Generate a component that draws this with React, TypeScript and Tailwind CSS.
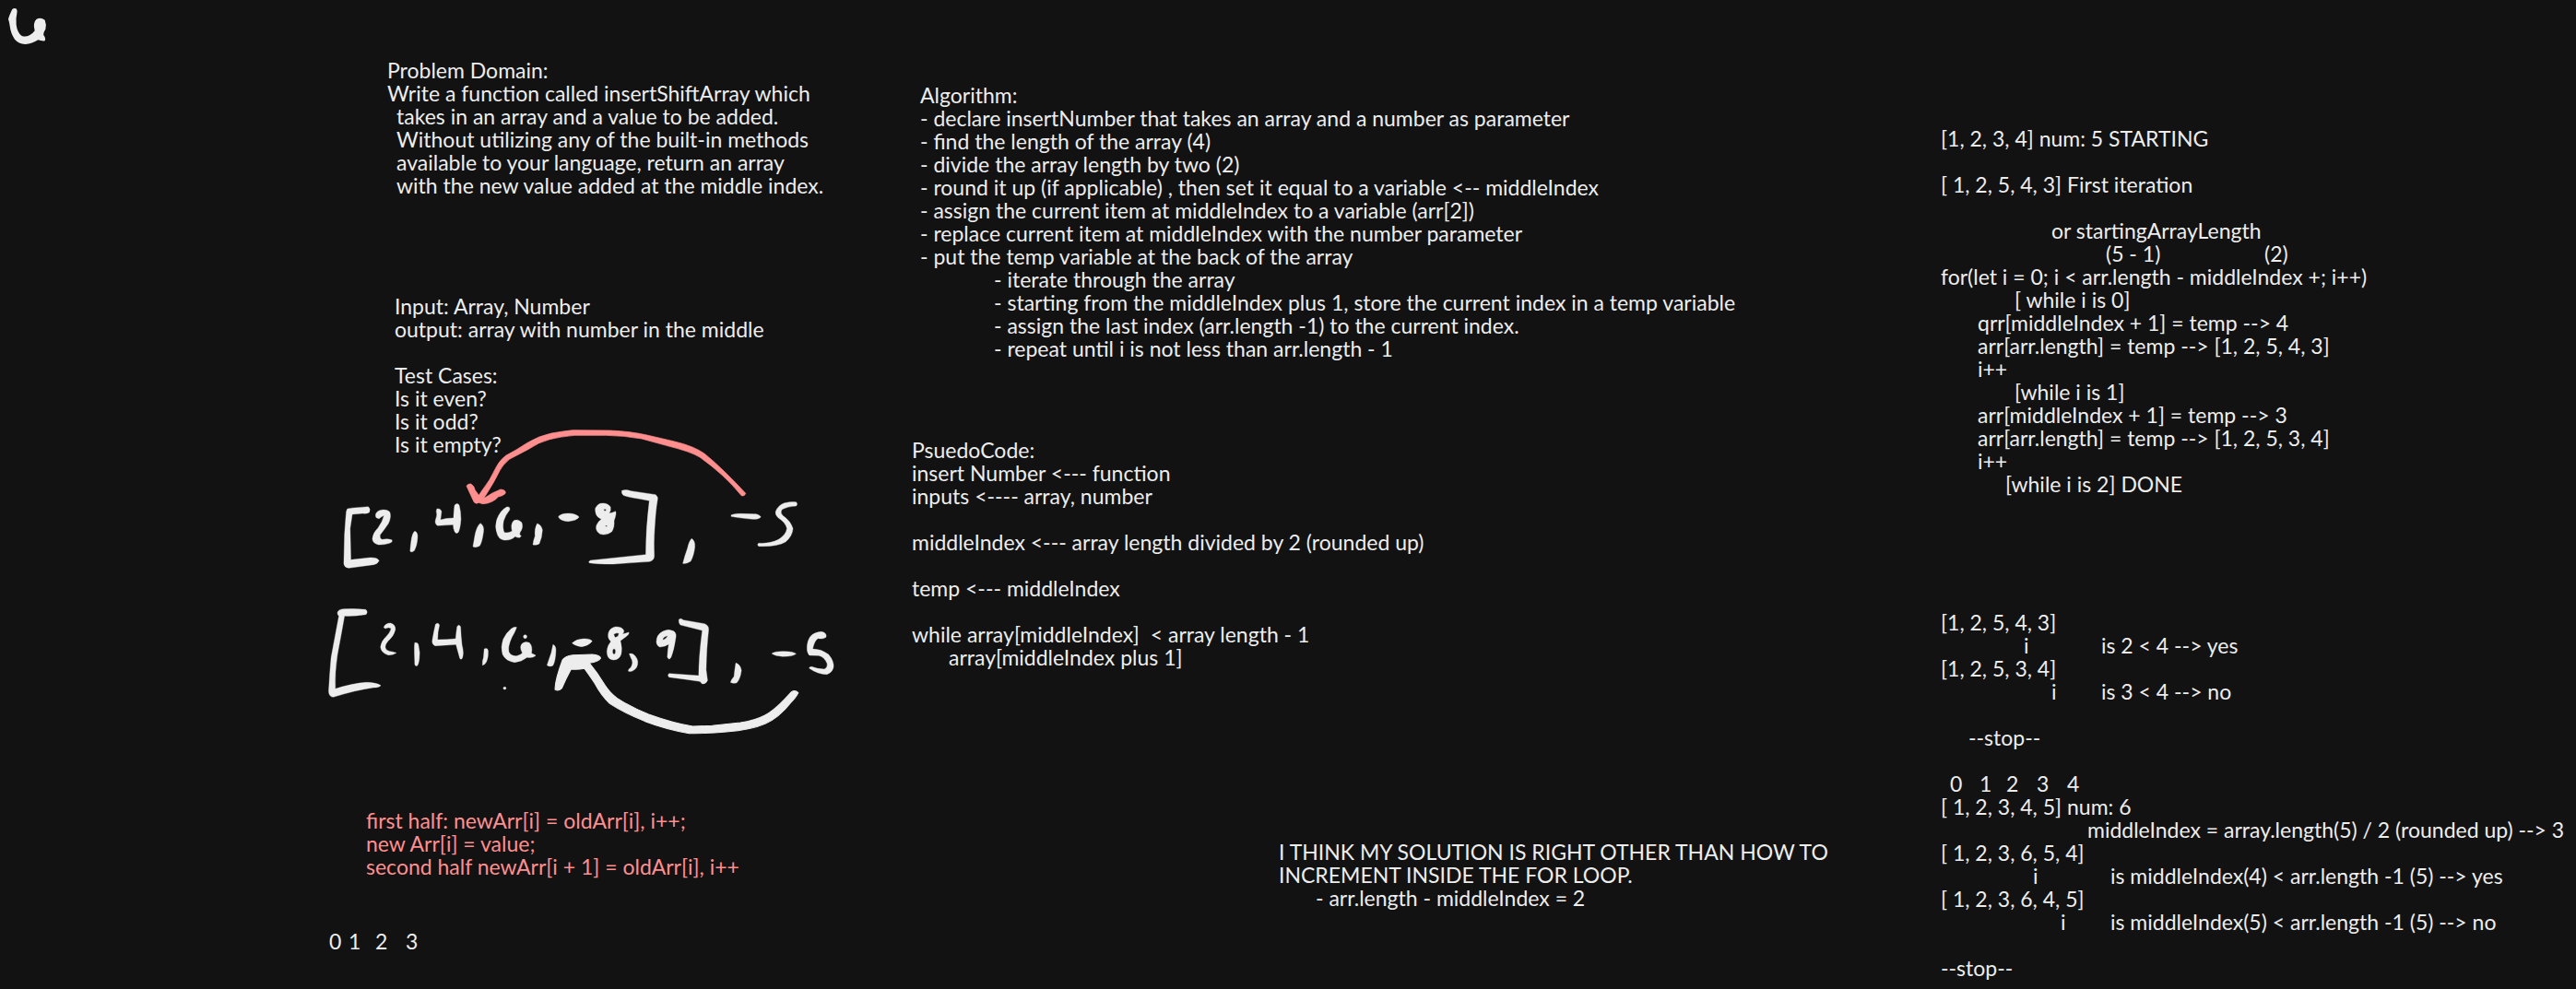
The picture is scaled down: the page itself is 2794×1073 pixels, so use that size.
import type { ReactNode } from "react";

/** A text block pinned on the canvas. */
function Note({ place, children }: { place: string; children: ReactNode }) {
  return <section className={`absolute whitespace-nowrap ${place}`}>{children}</section>;
}

/** One written line; an empty one keeps its height. */
function Line({ indent = "", children }: { indent?: string; children?: ReactNode }) {
  return <p className={`flex h-[25px] ${indent}`}>{children}</p>;
}

function Slot({ width, children }: { width: string; children?: ReactNode }) {
  return <span className={`shrink-0 ${width}`}>{children}</span>;
}

function Corner() {
  return (
    <svg className="absolute left-0 top-0 h-[60px] w-[80px]" viewBox="0 0 240 180" fill="#ededed" aria-hidden="true">
      <path d="M40 30Q47 24 54 29Q57 35 55 44Q51 60 53 80Q56 105 70 116Q82 122 96 115Q108 108 113 100Q106 75 118 63Q132 55 146 65Q152 80 148 95Q140 108 142 115Q150 125 146 133Q135 134 124 130Q105 142 82 144Q60 142 48 128Q35 110 32 85Q30 70 27 62Q30 50 40 30Z" />
    </svg>
  );
}

function FirstArray() {
  return (
    <svg className="absolute left-[340px] top-[440px] h-[190px] w-[600px]" viewBox="0 0 1568 570" preserveAspectRatio="none" strokeLinejoin="round" aria-hidden="true">
      <g fill="#ededed" fillRule="evenodd" stroke="#ededed" strokeWidth="1">
        <path d="M96 336C110 332 140 331 155 329Q163 336 158 348Q150 353 140 351L110 354L104 400L106 502L160 495Q182 494 186 505Q180 518 170 518L100 529Q88 528 86 515L88 420Q91 370 93 345Z" />
        <path d="M176 358Q176 346 188 341Q206 336 216 346Q222 362 212 385Q200 405 189 421Q187 433 194 436Q210 432 222 437Q226 443 216 448Q200 454 184 453Q168 448 167 434Q168 415 183 398Q196 378 200 358Q192 362 186 368Q176 368 176 358Z" />
        <path d="M287 409Q296 412 295 430Q294 455 286 472Q278 480 274 474Q275 455 277 440Q280 415 287 409Z" />
        <path d="M350 336Q360 334 363 345Q362 355 360 372Q375 366 397 366Q398 340 400 325Q406 315 413 324Q418 345 418 370Q416 400 411 412Q405 420 400 410Q396 400 396 388Q370 390 352 391Q343 385 346 372Q352 355 348 344Z" />
        <path d="M473 383Q484 390 482 410Q478 445 471 457Q460 464 452 459Q455 440 458 420Q463 392 473 383Z" />
        <path d="M548 330Q558 328 556 340Q545 355 539 375Q535 400 541 413Q552 416 563 409Q558 385 568 374Q580 368 590 380Q596 395 586 412Q582 420 589 425L584 430Q576 430 572 426Q560 440 540 438Q524 435 520 415Q513 395 520 370Q530 340 548 330Z" />
        <path d="M634 384Q646 388 649 405Q648 430 640 450Q632 456 622 453Q624 435 628 425Q626 400 634 384Z" />
        <path d="M694 362Q700 352 720 351Q742 350 753 363Q745 375 722 377Q700 376 694 362Z" />
        <path d="M800 350Q794 330 812 319Q832 314 842 330Q844 342 838 350Q846 350 856 344Q860 350 852 375Q854 395 846 410Q830 425 812 418Q798 408 802 390Q806 378 816 370Q802 362 800 350ZM822 338L829 337L829 343L825 343ZM828 390h4v4h-4Z" />
        <path d="M874 277Q885 272 900 278L970 290Q978 298 975 308Q970 340 967 400Q964 450 966 490Q965 505 952 508Q900 512 850 516Q800 516 782 512Q778 508 785 504L942 485Q942 400 952 310L925 304Q890 298 878 292Q872 285 874 277Z" />
        <path d="M1072 433Q1082 440 1081 460Q1078 490 1069 507Q1058 516 1047 514Q1052 490 1060 465Q1064 442 1072 433Z" />
        <path d="M1184 356Q1195 350 1215 352L1255 353Q1268 358 1268 363Q1262 371 1245 370Q1205 366 1184 361Z" />
        <path d="M1310 345Q1316 325 1335 317Q1355 312 1368 314Q1374 320 1368 327Q1345 328 1328 338Q1322 348 1330 358Q1352 375 1359 400Q1358 425 1338 444Q1315 460 1262 458Q1256 453 1262 448Q1295 450 1318 436Q1340 420 1342 400Q1338 380 1318 366Q1308 356 1310 345Z" />
      </g>
      <g fill="#ff8f8f" stroke="#ff8f8f" strokeWidth="2">
        <path d="M464 300L478 276Q500 245 518 200Q528 178 545 163Q575 145 605 122Q640 98 675 90Q710 83 735 80L840 81Q900 84 945 96L1020 116Q1080 132 1110 158Q1160 205 1225 286Q1222 296 1213 293Q1165 225 1095 168Q1070 150 1000 130L930 108Q880 98 830 97L740 97Q700 101 670 110Q640 118 608 143L555 175Q535 195 528 212Q512 250 486 296L470 312Z" />
        <path d="M434 262Q437 254 446 255Q456 262 458 275L470 294L486 300Q505 284 530 273Q546 274 544 286Q538 294 524 297Q508 318 480 320L468 316Q462 322 455 314Q445 290 434 262Z" />
      </g>
    </svg>
  );
}

function SecondArray() {
  return (
    <svg className="absolute left-[340px] top-[630px] h-[190px] w-[600px]" viewBox="0 0 1568 570" preserveAspectRatio="none" fill="#ededed" fillRule="evenodd" stroke="#ededed" strokeWidth="1" strokeLinejoin="round" aria-hidden="true">
      <path d="M68 104Q70 93 85 92Q120 90 148 94Q156 102 149 110Q120 116 88 115Q78 180 68 240Q60 300 62 352Q110 334 150 331Q180 332 191 341Q186 348 170 348Q120 356 56 379Q44 378 43 360Q46 300 50 250L72 115Q68 112 68 104Z" />
      <path d="M199 152Q204 138 218 138Q233 142 232 160Q228 180 212 196Q200 212 205 222Q210 230 222 231L235 235Q226 243 212 242Q192 236 190 216Q192 196 206 182Q218 168 220 155Q212 150 204 156Z" />
      <path d="M287 202Q297 200 298 212Q303 235 300 255Q298 272 294 277Q286 280 287 265Q286 235 286 215Z" />
      <path d="M346 142Q354 134 357 145Q352 165 352 192Q380 192 403 189Q405 165 407 150Q412 140 417 150Q418 180 421 210Q427 235 422 252Q416 262 413 245L404 208Q375 210 345 212Q335 208 337 193Q341 165 346 142Z" />
      <path d="M484 222Q494 218 495 228Q496 250 490 265Q486 274 479 275Q478 262 482 250Z" />
      <path d="M560 157Q570 148 576 152Q572 165 562 185Q550 215 554 232Q560 246 575 245Q588 242 592 235Q582 215 592 204Q600 196 612 202Q622 215 618 236L630 243Q625 252 605 250Q590 264 570 266Q545 262 536 240Q530 215 538 190Q546 170 560 157Z" />
      <ellipse cx="600" cy="182" rx="5" ry="6" />
      <path d="M679 208Q688 212 687 230Q686 260 679 276Q670 282 662 275Q668 255 674 235Z" />
      <path d="M733 203Q745 190 765 189Q785 188 790 197Q780 212 760 215Q742 212 733 203Z" />
      <path d="M836 170Q840 154 856 150Q876 150 880 163Q880 170 876 174L894 168Q896 174 886 182L870 196Q876 220 872 240Q866 258 850 258Q836 256 833 242Q828 220 843 198Q832 186 836 170ZM851 175Q860 168 866 172L863 181L855 185ZM848 226Q852 216 856 226Q858 238 851 240Q846 236 848 226Z" />
      <path d="M895 238Q905 234 912 245Q924 262 916 282Q906 298 893 295Q890 290 900 282Q908 265 900 252Z" />
      <path d="M972 200Q972 175 990 165Q1005 157 1015 162Q1030 165 1027 185Q1022 225 1014 248Q1008 262 1003 248Q1004 225 1007 207Q995 216 982 216Q973 212 972 200ZM990 193Q990 182 1004 179Q1001 189 990 193Z" />
      <path d="M1036 126Q1042 120 1048 128L1108 140Q1121 145 1120 160Q1114 220 1113 290L1117 325Q1112 338 1102 336L1095 328Q1050 320 1008 314Q1002 308 1008 302L1092 309Q1092 250 1102 162L1040 144Q1034 138 1036 126Z" />
      <path d="M1197 268Q1210 272 1213 292Q1210 320 1200 332Q1190 336 1182 331Q1184 322 1192 312Q1194 290 1197 268Z" />
      <path d="M1299 237Q1310 229 1335 230Q1362 231 1368 238Q1360 247 1330 247Q1308 245 1299 237Z" />
      <path d="M1408 182Q1420 167 1440 166Q1456 170 1453 184Q1445 192 1430 188Q1420 195 1415 222Q1440 222 1460 240Q1476 262 1474 282Q1470 300 1455 305Q1430 305 1405 285Q1405 280 1412 280Q1430 288 1448 288Q1458 282 1456 270Q1448 248 1432 244L1406 243Q1398 235 1399 215Q1400 195 1408 182Z" />
      <path strokeWidth="3" d="M685 350Q686 320 706 258Q712 246 735 242L790 240Q812 242 814 252Q808 264 782 268Q805 300 826 340Q840 365 860 382Q900 412 950 435Q1020 464 1075 474L1130 472L1210 462Q1250 456 1280 438Q1310 420 1355 362Q1365 354 1374 365Q1368 380 1352 398Q1320 445 1280 466Q1240 486 1170 492Q1120 498 1065 497Q1000 484 940 458Q880 430 840 400Q815 372 798 335Q780 305 768 286Q750 290 730 288Q715 320 704 350Q696 360 685 355Z" />
      <ellipse cx="542" cy="350" rx="4" ry="4" />
    </svg>
  );
}

export default function App() {
  return (
    <main className="relative min-h-screen w-full overflow-hidden bg-[#121212] font-['Virgil','Lato',sans-serif] text-[23px] leading-[25px] text-[#ededed]">
      <Corner />

      <Note place="left-[420px] top-[64px]">
        <Line>Problem Domain:</Line>
        <Line>Write a function called insertShiftArray which</Line>
        <Line indent="pl-[10px]">takes in an array and a value to be added.</Line>
        <Line indent="pl-[10px]">Without utilizing any of the built-in methods</Line>
        <Line indent="pl-[10px]">available to your language, return an array</Line>
        <Line indent="pl-[10px]">with the new value added at the middle index.</Line>
      </Note>

      <Note place="left-[428px] top-[320px]">
        <Line>Input: Array, Number</Line>
        <Line>output: array with number in the middle</Line>
        <Line />
        <Line>Test Cases:</Line>
        <Line>Is it even?</Line>
        <Line>Is it odd?</Line>
        <Line>Is it empty?</Line>
      </Note>

      <FirstArray />
      <SecondArray />

      <Note place="left-[397px] top-[878px] text-[#ff8f8f]">
        <Line>first half: newArr[i] = oldArr[i], i++;</Line>
        <Line>new Arr[i] = value;</Line>
        <Line>second half newArr[i + 1] = oldArr[i], i++</Line>
      </Note>

      <Note place="left-[357px] top-[1009px]">
        <Line>
          <Slot width="w-[21px]">0</Slot>
          <Slot width="w-[29px]">1</Slot>
          <Slot width="w-[33px]">2</Slot>
          <span>3</span>
        </Line>
      </Note>

      <Note place="left-[998px] top-[91px]">
        <Line>Algorithm:</Line>
        <Line>- declare insertNumber that takes an array and a number as parameter</Line>
        <Line>- find the length of the array (4)</Line>
        <Line>- divide the array length by two (2)</Line>
        <Line>- round it up (if applicable) , then set it equal to a variable &lt;-- middleIndex</Line>
        <Line>- assign the current item at middleIndex to a variable (arr[2])</Line>
        <Line>- replace current item at middleIndex with the number parameter</Line>
        <Line>- put the temp variable at the back of the array</Line>
        <Line indent="pl-[80px]">- iterate through the array</Line>
        <Line indent="pl-[80px]">- starting from the middleIndex plus 1, store the current index in a temp variable</Line>
        <Line indent="pl-[80px]">- assign the last index (arr.length -1) to the current index.</Line>
        <Line indent="pl-[80px]">- repeat until i is not less than arr.length - 1</Line>
      </Note>

      <Note place="left-[989px] top-[476px]">
        <Line>PsuedoCode:</Line>
        <Line>insert Number &lt;--- function</Line>
        <Line>inputs &lt;---- array, number</Line>
        <Line />
        <Line>middleIndex &lt;--- array length divided by 2 (rounded up)</Line>
        <Line />
        <Line>temp &lt;--- middleIndex</Line>
        <Line />
        <Line>
          <span className="mr-3">while array[middleIndex]</span>
          <span>&lt; array length - 1</span>
        </Line>
        <Line indent="pl-[40px]">array[middleIndex plus 1]</Line>
      </Note>

      <Note place="left-[1387px] top-[912px]">
        <Line>I THINK MY SOLUTION IS RIGHT OTHER THAN HOW TO</Line>
        <Line>INCREMENT INSIDE THE FOR LOOP.</Line>
        <Line indent="pl-[40px]">- arr.length - middleIndex = 2</Line>
      </Note>

      <Note place="left-[2105px] top-[138px]">
        <Line>[1, 2, 3, 4] num: 5 STARTING</Line>
        <Line />
        <Line>[ 1, 2, 5, 4, 3] First iteration</Line>
        <Line />
        <Line indent="pl-[120px]">or startingArrayLength</Line>
        <Line indent="pl-[179px]">
          <Slot width="w-[172px]">(5 - 1)</Slot>
          <span>(2)</span>
        </Line>
        <Line>for(let i = 0; i &lt; arr.length - middleIndex +; i++)</Line>
        <Line indent="pl-[80px]">[ while i is 0]</Line>
        <Line indent="pl-[40px]">qrr[middleIndex + 1] = temp --&gt; 4</Line>
        <Line indent="pl-[40px]">arr[arr.length] = temp --&gt; [1, 2, 5, 4, 3]</Line>
        <Line indent="pl-[40px]">i++</Line>
        <Line indent="pl-[80px]">[while i is 1]</Line>
        <Line indent="pl-[40px]">arr[middleIndex + 1] = temp --&gt; 3</Line>
        <Line indent="pl-[40px]">arr[arr.length] = temp --&gt; [1, 2, 5, 3, 4]</Line>
        <Line indent="pl-[40px]">i++</Line>
        <Line indent="pl-[70px]">[while i is 2] DONE</Line>
      </Note>

      <Note place="left-[2105px] top-[663px]">
        <Line>[1, 2, 5, 4, 3]</Line>
        <Line indent="pl-[90px]">
          <Slot width="w-[84px]">i</Slot>
          <span>is 2 &lt; 4 --&gt; yes</span>
        </Line>
        <Line>[1, 2, 5, 3, 4]</Line>
        <Line indent="pl-[120px]">
          <Slot width="w-[54px]">i</Slot>
          <span>is 3 &lt; 4 --&gt; no</span>
        </Line>
        <Line />
        <Line indent="pl-[30px]">--stop--</Line>
        <Line />
        <Line indent="pl-[10px]">
          <Slot width="w-[32px]">0</Slot>
          <Slot width="w-[29px]">1</Slot>
          <Slot width="w-[33px]">2</Slot>
          <Slot width="w-[33px]">3</Slot>
          <span>4</span>
        </Line>
        <Line>[ 1, 2, 3, 4, 5] num: 6</Line>
        <Line indent="pl-[159px]">middleIndex = array.length(5) / 2 (rounded up) --&gt; 3</Line>
        <Line>[ 1, 2, 3, 6, 5, 4]</Line>
        <Line indent="pl-[100px]">
          <Slot width="w-[84px]">i</Slot>
          <span>is middleIndex(4) &lt; arr.length -1 (5) --&gt; yes</span>
        </Line>
        <Line>[ 1, 2, 3, 6, 4, 5]</Line>
        <Line indent="pl-[130px]">
          <Slot width="w-[54px]">i</Slot>
          <span>is middleIndex(5) &lt; arr.length -1 (5) --&gt; no</span>
        </Line>
        <Line />
        <Line>--stop--</Line>
      </Note>
    </main>
  );
}
